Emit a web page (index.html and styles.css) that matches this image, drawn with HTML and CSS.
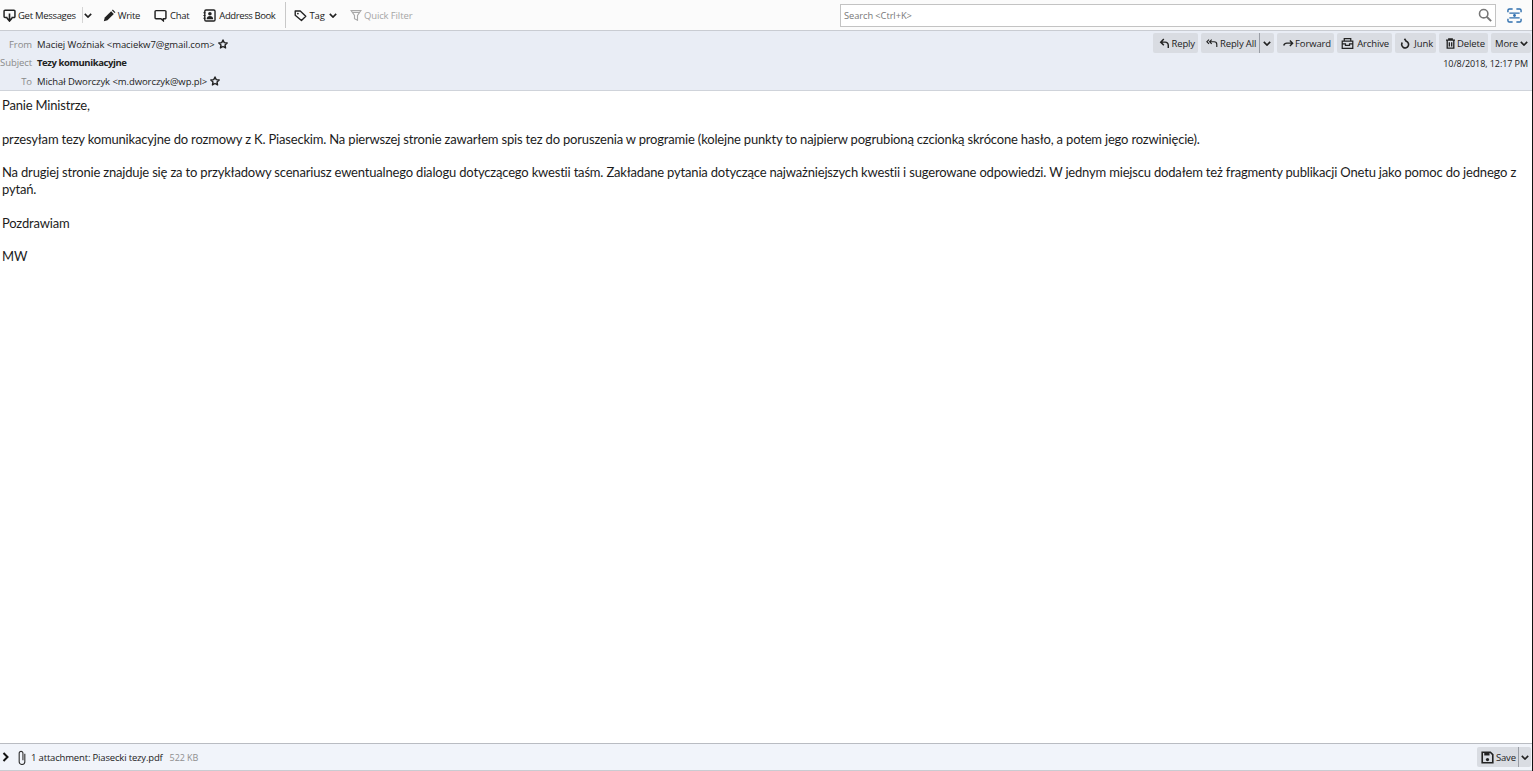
FILE: index.html
```html
<!DOCTYPE html>
<html lang="en">
<head>
    <meta charset="UTF-8">
    <meta name="viewport" content="width=device-width, initial-scale=1.0">
    <title>Tezy komunikacyjne</title>
    <link rel="stylesheet" href="styles.css">
</head>
<body>
    <div class="toolbar">
        <div class="tool-group">
            <span class="tool tool-get">
                <svg class="icon" viewBox="0 0 16 16"><path d="M5.500 10.500H2.500a1.200 1.200 0 0 1-1.200-1.200V2.700a1.200 1.200 0 0 1 1.200-1.200h11a1.200 1.200 0 0 1 1.200 1.200v6.600a1.200 1.200 0 0 1-1.200 1.200h-3" fill="none" stroke="#222" stroke-width="1.800"/><path d="M8 5.500v9M4.800 11l3.200 3.800 3.200-3.800" fill="none" stroke="#222" stroke-width="2"/></svg>
                Get Messages
            </span>
            <span class="tool-split"></span>
            <svg class="chev chev-get" viewBox="0 0 10 6"><path d="M1 1l4 4 4-4" fill="none" stroke="#222" stroke-width="2"/></svg>
            <span class="tool tool-write">
                <svg class="icon" viewBox="0 0 16 16"><path d="M1 15l1.200-4.500L10 2.700l3.300 3.300-7.800 7.800z" fill="#222"/><path d="M11 1.700l1-1 3.300 3.300-1 1z" fill="#222"/></svg>
                Write
            </span>
            <span class="tool tool-chat">
                <svg class="icon" viewBox="0 0 16 16"><path d="M2.500 2h11a1.200 1.200 0 0 1 1.200 1.200v7.600a1.200 1.200 0 0 1-1.200 1.200H11.500v2.500L8.500 12h-6a1.200 1.200 0 0 1-1.200-1.200V3.200A1.200 1.200 0 0 1 2.500 2z" fill="none" stroke="#222" stroke-width="1.800"/></svg>
                Chat
            </span>
            <span class="tool tool-book">
                <svg class="icon" viewBox="0 0 16 16"><rect x="2.200" y="1.200" width="12.600" height="13.600" rx="1.500" fill="none" stroke="#222" stroke-width="1.700"/><circle cx="8.500" cy="5.800" r="2.200" fill="#222"/><path d="M4.500 12.500c0-2.800 1.800-4 4-4s4 1.200 4 4z" fill="#222"/><path d="M0.500 4.500h2.500M0.500 8h2.500M0.500 11.500h2.500" stroke="#222" stroke-width="1.300"/></svg>
                Address Book
            </span>
            <span class="tool-divider"></span>
            <span class="tool tool-tag">
                <svg class="icon" viewBox="0 0 16 16"><path d="M1.500 2.500h6.200l6.800 6.500-5.300 5.200L1.500 7.800z" fill="none" stroke="#222" stroke-width="1.700" stroke-linejoin="round"/><circle cx="4.800" cy="5.600" r="1.100" fill="#222"/></svg>
                Tag
                <svg class="chev" viewBox="0 0 10 6"><path d="M1 1l4 4 4-4" fill="none" stroke="#222" stroke-width="2"/></svg>
            </span>
            <span class="tool tool-filter">
                <svg class="icon icon-filter" viewBox="0 0 16 16"><path d="M1.500 2h13L10 8.500V15l-4-2V8.500zM3 4.500h10" fill="none" stroke="#a8a8a8" stroke-width="1.500"/></svg>
                Quick Filter
            </span>
        </div>
        <div class="search-wrap">
            <div class="search-box">
                <span>Search &lt;Ctrl+K&gt;</span>
                <svg class="search-icon" viewBox="0 0 16 16"><circle cx="6.500" cy="6.500" r="4.800" fill="none" stroke="#777" stroke-width="1.800"/><path d="M10 10l5 5" stroke="#777" stroke-width="2.200"/></svg>
            </div>
            <svg class="scan-icon" viewBox="0 0 16 16"><path d="M1 4.500V2.500A1.500 1.500 0 0 1 2.500 1H6M10 1h3.500A1.500 1.500 0 0 1 15 2.500v2M1 11.500v2A1.500 1.500 0 0 0 2.500 15H6M10 15h3.500a1.500 1.500 0 0 0 1.500-1.500v-2" fill="none" stroke="#2f6fae" stroke-width="1.500"/><path d="M2.500 5.500h11M2.500 10.500h11" fill="none" stroke="#2f6fae" stroke-width="1.200"/><circle cx="8" cy="8" r="1.500" fill="#2f6fae"/></svg>
        </div>
    </div>

    <div class="msg-header">
        <div class="header-fields">
            <div class="field">
                <span class="field-label">From</span>
                <span>Maciej Woźniak &lt;maciekw7@gmail.com&gt;</span>
                <svg class="star" viewBox="0 0 16 16"><path d="M8 1.500l2 4.300 4.700.6-3.500 3.200.9 4.700L8 12l-4.100 2.300.9-4.700L1.300 6.400 6 5.800z" fill="none" stroke="#222" stroke-width="2.200" stroke-linejoin="round"/></svg>
            </div>
            <div class="field">
                <span class="field-label">Subject</span>
                <strong class="subject">Tezy komunikacyjne</strong>
            </div>
            <div class="field">
                <span class="field-label">To</span>
                <span>Michał Dworczyk &lt;m.dworczyk@wp.pl&gt;</span>
                <svg class="star" viewBox="0 0 16 16"><path d="M8 1.500l2 4.300 4.700.6-3.500 3.200.9 4.700L8 12l-4.100 2.300.9-4.700L1.300 6.400 6 5.800z" fill="none" stroke="#222" stroke-width="2.200" stroke-linejoin="round"/></svg>
            </div>
        </div>
        <div class="header-side">
            <div class="actions">
                <span class="btn btn-reply">
                    <svg class="icon-sm" viewBox="0 0 16 16"><path d="M7 1.500L2.500 6 7 10.500M2.500 6h6.500a4.500 4.500 0 0 1 4.500 4.500V14.500" fill="none" stroke="#222" stroke-width="2.100"/></svg>
                    Reply
                </span>
                <span class="btn btn-split btn-all">
                    <span class="btn-main">
                        <svg class="icon-sm icon-all" viewBox="0 0 20 16"><path d="M5 1.500L1.500 5 5 8.500M9.500 1.500L6 5l3.500 3.500M6 5h7.500A4.500 4.500 0 0 1 18 9.500V14" fill="none" stroke="#222" stroke-width="1.900"/></svg>
                        Reply All
                    </span>
                    <span class="btn-drop"><svg class="chev" viewBox="0 0 10 6"><path d="M1 1l4 4 4-4" fill="none" stroke="#222" stroke-width="2"/></svg></span>
                </span>
                <span class="btn btn-forward">
                    <svg class="icon-sm" viewBox="0 0 16 16"><path d="M1 11c.8-2.400 2.500-3.500 4.500-3.500H14M10 3.500l4 4-4 4" fill="none" stroke="#222" stroke-width="2"/></svg>
                    Forward
                </span>
                <span class="btn btn-archive">
                    <svg class="icon-sm icon-md" viewBox="0 0 16 16"><path d="M4 4.500V2h8v2.500M1.500 5h13v9h-13zM1.500 8.500h4v1.700h5V8.500h4" fill="none" stroke="#222" stroke-width="1.500"/></svg>
                    Archive
                </span>
                <span class="btn btn-junk">
                    <svg class="icon-sm" viewBox="0 0 16 16"><path d="M6.500 1l2.500 3.700a5 5 0 1 1-5.600 1.800" fill="none" stroke="#222" stroke-width="2.300"/></svg>
                    Junk
                </span>
                <span class="btn btn-delete">
                    <svg class="icon-sm" viewBox="0 0 16 16"><path d="M1.500 3.200h13M5.500 3V1.200h5V3M3.200 3.500v11.300h9.600V3.500M6.300 6v6.300M9.700 6v6.300" fill="none" stroke="#222" stroke-width="1.900"/></svg>
                    Delete
                </span>
                <span class="btn btn-more">
                    More
                    <svg class="chev" viewBox="0 0 10 6"><path d="M1 1l4 4 4-4" fill="none" stroke="#222" stroke-width="2"/></svg>
                </span>
            </div>
            <div class="msg-date">10/8/2018, 12:17 PM</div>
        </div>
    </div>

    <div class="msg-body">
        <p>Panie Ministrze,</p>
        <p>przesyłam tezy komunikacyjne do rozmowy z K. Piaseckim. Na pierwszej stronie zawarłem spis tez do poruszenia w programie (kolejne punkty to najpierw pogrubioną czcionką skrócone hasło, a potem jego rozwinięcie).</p>
        <p>Na drugiej stronie znajduje się za to przykładowy scenariusz ewentualnego dialogu dotyczącego kwestii taśm. Zakładane pytania dotyczące najważniejszych kwestii i sugerowane odpowiedzi. W jednym miejscu dodałem też fragmenty publikacji Onetu jako pomoc do jednego z pytań.</p>
        <p>Pozdrawiam</p>
        <p>MW</p>
    </div>

    <div class="attach-bar">
        <svg class="attach-toggle" viewBox="0 0 8 10"><path d="M1.500 1l4 4-4 4" fill="none" stroke="#111" stroke-width="2"/></svg>
        <svg class="clip" viewBox="0 0 10 16"><path d="M8 4v8.500a3 3 0 0 1-6 0V3.500a2 2 0 0 1 4 0V11" fill="none" stroke="#333" stroke-width="1.200"/></svg>
        <span class="attach-name">1 attachment: Piasecki tezy.pdf</span>
        <span class="attach-size">522 KB</span>
        <span class="btn btn-split btn-save">
            <span class="btn-main">
                <svg class="icon-save" viewBox="0 0 16 16"><path d="M1.500 1.500h10l3 3v10h-13z" fill="none" stroke="#222" stroke-width="2"/><path d="M4 2h6.500v3.500H4z" fill="#222"/><circle cx="8" cy="10.500" r="2" fill="#222"/></svg>
                Save
            </span>
            <span class="btn-drop"><svg class="chev" viewBox="0 0 10 6"><path d="M1 1l4 4 4-4" fill="none" stroke="#222" stroke-width="2"/></svg></span>
        </span>
    </div>
</body>
</html>
```
FILE: styles.css
```css
body {
    margin: 0;
    display: flex;
    flex-direction: column;
    height: 771px;
    box-sizing: border-box;
    overflow: hidden;
    background: #fff;
    border-right: 1px solid #111;
    color: #222;
    font-family: "Open Sans", "Liberation Sans", sans-serif;
    font-size: 9.500px;
    letter-spacing: -0.07px;
}
svg {
    flex: none;
}
.toolbar {
    height: 31px;
    flex: none;
    box-sizing: border-box;
    padding: 0 10px 0 3px;
    display: flex;
    align-items: center;
    justify-content: space-between;
    background: #fbfbfb;
    border-bottom: 1px solid #c9ccd2;
}
.tool-group {
    display: flex;
    align-items: center;
}
.tool {
    display: flex;
    align-items: center;
    gap: 2px;
    white-space: nowrap;
}
.tool-get, .tool-write, .tool-chat {
    letter-spacing: -0.3px;
}
.tool-book {
    letter-spacing: -0.4px;
}
.icon {
    width: 13px;
    height: 13px;
}
.icon-filter {
    width: 12px;
    height: 12px;
}
.chev {
    width: 8px;
    height: 5px;
}
.tool-split {
    width: 1px;
    height: 16px;
    margin-left: 6px;
    background: #d5d5d5;
}
.chev-get {
    margin: 0 11px 0 1px;
}
.tool-chat {
    margin-left: 14px;
    gap: 3px;
}
.tool-book {
    margin-left: 14px;
    gap: 3px;
}
.tool-divider {
    width: 1px;
    height: 26px;
    margin: 0 8px 0 10px;
    background: #c8c8c8;
}
.tool-tag .chev {
    margin-left: 2px;
}
.tool-filter {
    margin-left: 13px;
    letter-spacing: -0.12px;
    color: #a6a6a6;
}
.search-wrap {
    display: flex;
    align-items: center;
    gap: 11px;
}
.search-box {
    width: 656px;
    height: 23px;
    box-sizing: border-box;
    padding: 0 3px;
    display: flex;
    align-items: center;
    justify-content: space-between;
    background: #fff;
    border: 1px solid #c3c3c3;
    color: #777;
    font-size: 9.300px;
}
.search-icon {
    width: 14px;
    height: 14px;
}
.scan-icon {
    width: 15px;
    height: 15px;
}
.msg-header {
    height: 60px;
    flex: none;
    box-sizing: border-box;
    display: flex;
    justify-content: space-between;
    background: #e9edf5;
    border-bottom: 1px solid #cfd3da;
}
.header-fields {
    padding-top: 4px;
}
.field {
    height: 18.500px;
    display: flex;
    align-items: center;
    gap: 3px;
    white-space: nowrap;
}
.field-label {
    width: 32px;
    margin-right: 2px;
    text-align: right;
    color: #8a8a8a;
}
.subject {
    letter-spacing: -0.4px;
}
.star {
    width: 10px;
    height: 10px;
}
.header-side {
    padding: 2px 1px 0 0;
    display: flex;
    flex-direction: column;
    align-items: flex-end;
}
.actions {
    display: flex;
    gap: 3px;
    letter-spacing: -0.13px;
}
.btn {
    height: 20px;
    box-sizing: border-box;
    padding: 0 3px 0 6px;
    display: flex;
    align-items: center;
    justify-content: space-between;
    background: #d9dce2;
    border-radius: 2px;
    white-space: nowrap;
}
.btn-reply {
    width: 45px;
}
.btn-all {
    width: 73px;
}
.btn-forward {
    width: 57px;
}
.btn-archive {
    width: 55px;
    padding-left: 4px;
}
.btn-junk {
    width: 41px;
    padding-left: 5px;
}
.btn-delete {
    width: 49px;
}
.btn-more {
    width: 40px;
    padding-left: 4px;
}
.btn-split {
    padding: 0;
}
.btn-main {
    padding: 0 2px 0 5px;
    display: flex;
    align-items: center;
    gap: 2px;
}
.btn-drop {
    height: 100%;
    box-sizing: border-box;
    padding: 0 3px;
    display: flex;
    align-items: center;
    border-left: 1px solid #9a9ea6;
}
.icon-sm {
    width: 11px;
    height: 11px;
}
.icon-md {
    width: 13px;
    height: 13px;
}
.icon-all {
    width: 12px;
}
.msg-date {
    margin-top: 4px;
    margin-right: 3px;
    font-size: 9px;
}
.msg-body {
    flex: 1;
    padding: 6px 3px 0 2px;
    font-family: Lato, "Open Sans", sans-serif;
    font-size: 13px;
    line-height: 16.800px;
    letter-spacing: -0.18px;
    color: #1c1c1c;
}
.msg-body p {
    margin: 0 0 16.800px;
}
.attach-bar {
    height: 28px;
    flex: none;
    box-sizing: border-box;
    padding-left: 2px;
    display: flex;
    align-items: center;
    background: #f1f4fa;
    border-top: 1px solid #b9bcc2;
    border-bottom: 1px solid #c9ccd2;
}
.attach-toggle {
    width: 8px;
    height: 10px;
}
.clip {
    width: 10px;
    height: 15px;
    margin: 0 4px 0 7px;
}
.attach-name {
    letter-spacing: -0.17px;
}
.attach-size {
    margin-left: 7px;
    font-size: 9px;
    color: #8f8f8f;
}
.btn-save {
    width: 54px;
    margin: 0 1px 0 auto;
}
.icon-save {
    width: 13px;
    height: 13px;
}
.btn-save .btn-main {
    padding-left: 4px;
    letter-spacing: -0.2px;
}
.btn-save .btn-drop {
    padding: 0 2px;
}
```
